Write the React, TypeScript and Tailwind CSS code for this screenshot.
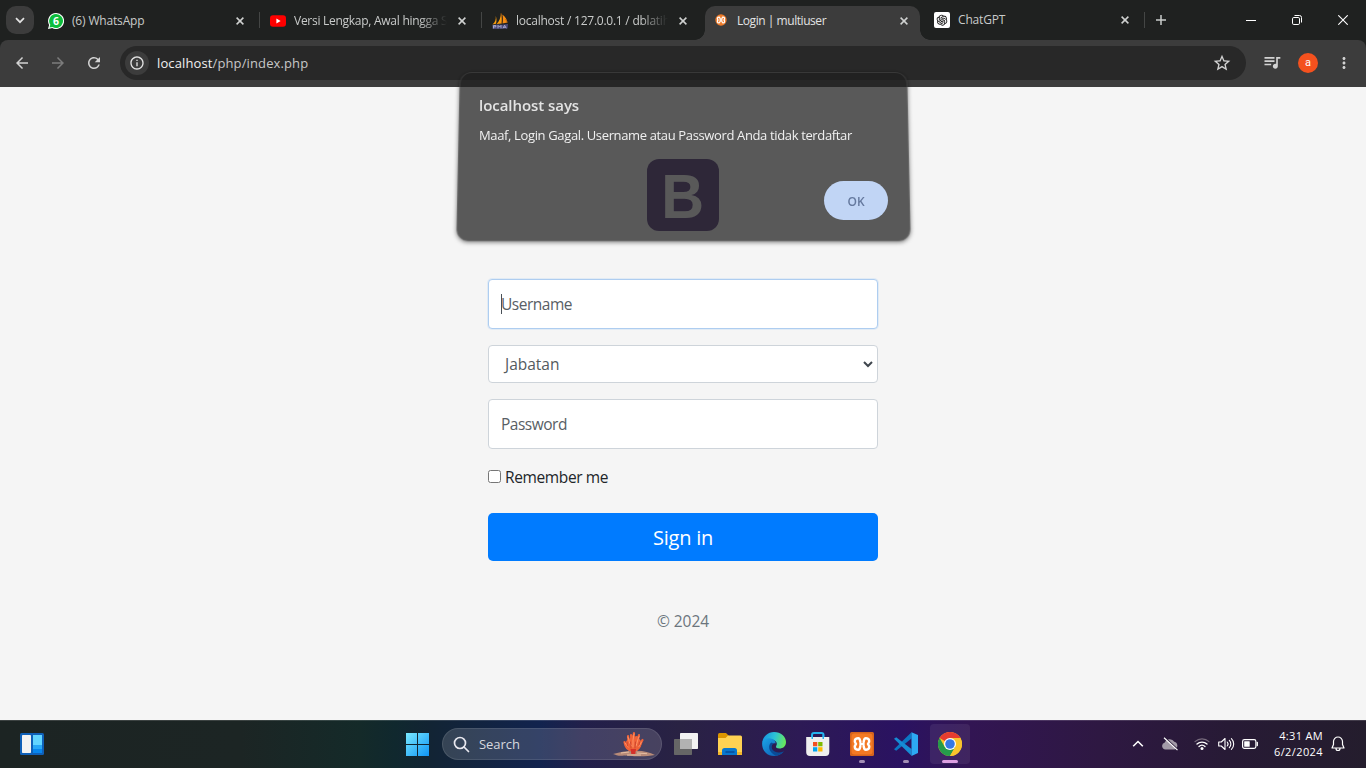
import React from 'react';
import {
  MdArrowBack,
  MdArrowForward,
  MdRefresh,
  MdStarBorder,
  MdQueueMusic,
  MdMoreVert,
  MdInfoOutline,
} from 'react-icons/md';
import { AiOutlineOpenAI } from 'react-icons/ai';

function CloseMark() {
  return (
    <svg width="8" height="8" viewBox="0 0 8 8" className="shrink-0" stroke="#d0d2d1" strokeWidth="1.5">
      <path d="M0.6 0.6L7.4 7.4M7.4 0.6L0.6 7.4" />
    </svg>
  );
}

function WhatsAppIcon() {
  return (
    <svg width="16" height="16" viewBox="0 0 16 16" className="shrink-0">
      <path d="M8 0a8 8 0 1 1-3.8 15L0 16l1.1-4A8 8 0 0 1 8 0z" fill="#fff" />
      <path d="M8 1.1a6.9 6.9 0 1 1-3.5 12.8l-3 .7.8-2.8A6.9 6.9 0 0 1 8 1.1z" fill="#0dbd3c" />
      <text x="8" y="12" textAnchor="middle" fontFamily="Open Sans, sans-serif" fontWeight="700" fontSize="10.5" fill="#fff">6</text>
    </svg>
  );
}

function YouTubeIcon() {
  return (
    <svg width="16" height="16" viewBox="0 0 16 16" className="shrink-0">
      <rect x="0" y="2.3" width="16" height="11.4" rx="3" fill="#ff0000" />
      <path d="M6.4 5.6v4.8L10.6 8z" fill="#fff" />
    </svg>
  );
}

function PmaIcon() {
  return (
    <svg width="16" height="16" viewBox="0 0 16 16" className="shrink-0">
      <path d="M3.8 3C4 6.5 3.300 9.500 .4 11.500L4 10.800C4.700 8 4.700 5.500 3.800 3z" fill="#f89c0e" />
      <path d="M9 .2C8.600 4.600 7.500 8 4.600 11.100L9.600 10.400C10.200 6.700 10 3.500 9 .2z" fill="#f89c0e" />
      <path d="M10.300 1.600C11.200 4.800 11.300 7.500 10.500 10.500L15.500 9.500C14.800 6.500 13.500 4 10.300 1.600z" fill="#f38b12" />
      <path d="M9 .2C10 4 10.100 7 9.600 10.400M13.600 6l1.600 3.400" stroke="#a85c10" strokeWidth=".7" fill="none" />
      <path d="M.3 12l5-.6 5 .3 5.700-.8-.5 4.500-6 .4-8.800.1z" fill="#4b4b78" />
      <path d="M1.500 15.400V12.500h2.300v1.400H1.500M6 15.400v-3l1.500 1.600 1.500-1.600v3M11 15.300l1.600-3 1.700 3M11.500 14.300h2.200" stroke="#b9b9da" strokeWidth=".8" fill="none" />
    </svg>
  );
}

const xamppOutline =
  'M8.200 6.300C10 6.300 9.800 8.300 10.300 9.300H13.700C14.200 8.300 14 6.300 15.800 6.300C19.300 6.300 20.300 9.300 18 12C20.300 14.700 19.300 17.700 15.800 17.700C14 17.700 14.200 15.700 13.700 14.700H10.300C9.800 15.700 10 17.700 8.200 17.700C4.700 17.700 3.700 14.700 6 12C3.700 9.300 4.700 6.300 8.200 6.300z';

function XamppMark({ ground }: { ground: string }) {
  return (
    <>
      <path d={xamppOutline} fill={ground} stroke="#fff" strokeWidth="2.500" strokeLinejoin="round" />
      <path d="M12 5.500V10.600M12 13.400V18.500" stroke={ground} strokeWidth="1.400" />
      <path d="M10.300 9V15M13.700 9V15M10.300 12H13.700" stroke="#fff" strokeWidth="1.900" />
    </>
  );
}

function XamppFavicon() {
  return (
    <svg width="12" height="12" viewBox="0 0 24 24" className="shrink-0">
      <circle cx="12" cy="12" r="11.300" fill="#f07c2a" />
      <XamppMark ground="#f07c2a" />
    </svg>
  );
}

function Tab({ icon, title, width, fade = false }: { icon: React.ReactNode; title: string; width: string; fade?: boolean }) {
  return (
    <div className={`flex h-7 shrink-0 items-center ${width}`}>
      {icon}
      <div
        className={`ml-2 min-w-0 flex-1 whitespace-nowrap ${
          fade ? 'mr-[11px] [mask-image:linear-gradient(to_right,black_82%,transparent_100%)]' : ''
        }`}
      >
        {title}
      </div>
      <CloseMark />
    </div>
  );
}

function Separator() {
  return <div className="h-4 w-px shrink-0 bg-[#444645]" />;
}

function TabStrip() {
  return (
    <div className="flex h-10 items-center bg-[#1f2120] text-[12px] leading-4 tracking-[-0.17px] text-[#c9cbca]">
      <div className="ml-1.5 flex size-7 shrink-0 items-center justify-center rounded-[10px] bg-[#3c3c3c]">
        <svg width="10" height="7" viewBox="0 0 10 7" fill="none" stroke="#e2e2e2" strokeWidth="1.7">
          <path d="M1 1.200L5 5.200L9 1.200" />
        </svg>
      </div>
      <div className="w-[3px] shrink-0" />
      <Tab width="w-[222px] pl-[11px] pr-[15px] pt-px" icon={<WhatsAppIcon />} title="(6) WhatsApp" />
      <Separator />
      <Tab width="w-[221px] pl-[10px] pr-[15px] pt-px tracking-[-0.27px]" icon={<YouTubeIcon />} title="Versi Lengkap, Awal hingga S" fade />
      <Separator />
      <Tab width="w-[221px] pl-[10px] pr-4 pt-px tracking-[-0.24px]" icon={<PmaIcon />} title="localhost / 127.0.0.1 / dblatih" fade />
      <div className="relative ml-[2px] flex h-[34px] w-[215px] shrink-0 items-center self-end rounded-t-[10px] bg-[#3c3c3c] pl-[10px] pr-3 text-[#e3e3e3]">
        <div className="absolute -left-[10px] bottom-0 size-[10px] bg-[radial-gradient(circle_at_0_0,#1f2120_9.5px,#3c3c3c_10px)]" />
        <div className="absolute -right-[10px] bottom-0 size-[10px] bg-[radial-gradient(circle_at_100%_0,#1f2120_9.5px,#3c3c3c_10px)]" />
        <div className="mb-1.5">
          <XamppFavicon />
        </div>
        <div className="mb-[5px] ml-[10px] flex-1 whitespace-nowrap tracking-[-0.45px]">Login | multiuser</div>
        <div className="mb-[5px]">
          <CloseMark />
        </div>
      </div>
      <Tab
        width="ml-[3px] w-[221px] pl-[11px] pr-[15px]"
        icon={
          <div className="flex size-4 shrink-0 items-center justify-center rounded-[2px] bg-white">
            <AiOutlineOpenAI size={14} color="#111" />
          </div>
        }
        title="ChatGPT"
      />
      <Separator />
      <svg width="10" height="10" viewBox="0 0 10 10" className="ml-[11px] shrink-0" stroke="#c9cbca" strokeWidth="1.500">
        <path d="M5 0V10M0 5H10" />
      </svg>
      <div className="flex flex-1 items-center justify-end pr-[18px]">
        <svg width="10" height="10" viewBox="0 0 10 10" stroke="#fff">
          <path d="M0 5.500H10" />
        </svg>
        <svg width="10" height="10" viewBox="0 0 10 10" className="ml-9" fill="none" stroke="#fff">
          <rect x=".5" y="2.500" width="7" height="7" rx="1.300" />
          <path d="M2.500 .5H7.500A2 2 0 0 1 9.500 2.500V7.500" />
        </svg>
        <svg width="10" height="10" viewBox="0 0 10 10" className="ml-9" stroke="#fff" strokeWidth="1.100">
          <path d="M0.300 .3L9.700 9.700M9.700 .3L.3 9.700" />
        </svg>
      </div>
    </div>
  );
}

function Toolbar() {
  return (
    <div className="bg-[#1f2120]">
      <div className="flex h-[47px] items-center rounded-t-[8px] bg-[#3c3c3c] pb-px pl-[13px]">
        <MdArrowBack size={18} color="#d2d2d2" />
        <MdArrowForward size={18} color="#7c7c7c" className="ml-[18px]" />
        <MdRefresh size={18} color="#d2d2d2" className="ml-[18px]" />
        <div className="ml-[17px] flex h-[34px] w-[1126px] items-center rounded-full bg-[#282828] pl-[5px] pr-[14px]">
          <div className="flex size-6 items-center justify-center rounded-full bg-[#3c3c3c]">
            <MdInfoOutline size={16} color="#e3e3e3" />
          </div>
          <div className="ml-2 flex-1 text-[13px] leading-5 tracking-[0.12px] text-[#c7c7c7]">
            <span className="text-[#f0f0f0]">localhost</span>/php/index.php
          </div>
          <MdStarBorder size={20} color="#d2d2d2" />
        </div>
        <MdQueueMusic size={20} color="#d2d2d2" className="mb-0.5 ml-4" />
        <div className="ml-4 flex size-5 items-center justify-center rounded-full bg-[#f4511e] pb-px font-['Roboto',sans-serif] text-[11px] leading-none text-white">
          a
        </div>
        <MdMoreVert size={18} color="#d2d2d2" className="ml-[17px]" />
      </div>
    </div>
  );
}

function LoginPage() {
  return (
    <main className="flex h-[633px] flex-col items-center bg-[#f5f5f5] pt-[72px] text-[16px] leading-6 text-[#495057]">
      <div className="flex size-[72px] items-center justify-center rounded-[12px] bg-[#563d7c] font-['Liberation_Sans',sans-serif] text-[63px] font-bold leading-[72px] text-[#f5f5f5]">
        <span className="mt-px scale-x-[0.94]">B</span>
      </div>
      <form className="mt-12 flex w-[390px] flex-col">
        <div className="flex h-[50px] items-center rounded border border-[#aecdf0] bg-white pl-3 shadow-[0_0_0_1px_rgba(0,123,255,0.08)]">
          <div className="h-5 w-px bg-[#495057]" />
          <span className="-ml-px text-[15.5px] tracking-[-0.48px] text-[#585e65]">Username</span>
        </div>
        <div className="mt-4 flex h-[38px] items-center justify-between rounded border border-[#ced4da] bg-white pl-4 pr-1">
          <span className="text-[15.5px] tracking-[-0.02px] text-[#535a60]">Jabatan</span>
          <svg width="10" height="7" viewBox="0 0 10 7" fill="none" stroke="#3f464d" strokeWidth="2">
            <path d="M1 1L5 5L9 1" />
          </svg>
        </div>
        <div className="mt-4 flex h-[50px] items-center rounded border border-[#ced4da] bg-white pl-3 text-[15.5px] tracking-[-0.5px] text-[#585e65]">
          Password
        </div>
        <label className="mt-4 flex h-6 items-center text-[#212529]">
          <span className="mb-px size-[13px] rounded-[2.500px] border border-[#767676] bg-white" />
          <span className="ml-1 text-[15.5px] tracking-[-0.38px]">Remember me</span>
        </label>
        <button type="button" className="mt-6 h-12 rounded-[5px] bg-[#007bff] pt-px text-[20px] leading-[30px] tracking-[-0.25px] text-white">
          Sign in
        </button>
      </form>
      <p className="mt-12 text-[15.5px] tracking-[-0.05px] text-[#6c757d]">© 2024</p>
    </main>
  );
}

function AlertDialog() {
  return (
    <div className="absolute left-[458px] top-[72px] h-[169px] w-[450px]">
      <div className="absolute -left-[0.5px] right-0 -top-[0.8px] bottom-0 rounded-[12px] border border-white/10 bg-[rgba(30,30,30,0.726)] shadow-[0_1px_4px_rgba(0,0,0,0.5)] [transform:perspective(1000px)_rotateX(5.3deg)]" />
      <div className="relative flex h-full flex-col pl-[21px] pr-5 pt-[23px]">
        <h2 className="text-[15px] font-semibold leading-5 tracking-[-0.05px] text-[#e3e3e3]">localhost says</h2>
        <p className="mt-[11px] whitespace-nowrap text-[13px] leading-[18px] tracking-[-0.36px] text-[#f0f0f0]">
          Maaf, Login Gagal. Username atau Password Anda tidak terdaftar
        </p>
        <button type="button" className="mt-[37px] h-[39px] w-16 self-end rounded-full bg-[#c1d5f5] pt-0.5 text-[12px] font-semibold text-[#65799e]">
          OK
        </button>
      </div>
    </div>
  );
}

function CoralArt() {
  return (
    <svg width="44" height="26" viewBox="0 0 44 26">
      <path d="M1 23C8 21 14 20 20 20C29 19 37 21 43 24C34 26 16 25 12 24.500C7 25.500 4 24 1 23z" fill="#b88b78" />
      <path d="M9 22l8-1M25 22l10 .7M15 24h14" stroke="#e6bea2" strokeWidth="1" />
      <path d="M14 17C12 13 14 9 17 8L21 4L26 7C30 9 30 14 28 17L25 20H17z" fill="#f0653c" />
      <g fill="none" strokeLinecap="round" strokeLinejoin="round">
        <path d="M21 20V9L22 2M21 19C16 18 17 12 16 5M21 19C26 17 25 11 27 4M20 19C14 19 13 14 12.500 11M22 19C29 18 28 12 30.500 9M20 12L19 4M24 15L24.500 6" stroke="#ef6238" strokeWidth="2.200" />
        <path d="M21 16V9L22 3M19.500 15C17 12 17 9 16 6M24 15C25.500 11 25.500 9 27 5.500M16 16L13 12M27 15.500L29.500 11" stroke="#ff9467" strokeWidth="1" />
        <path d="M19 17L18.500 11M23 17L23.500 11M15.500 15L15 11M27 14L27.500 11" stroke="#c5402c" strokeWidth=".8" />
      </g>
      <path d="M18.500 18h5.500l-.7 5h-4z" fill="#d4312a" />
    </svg>
  );
}

function WidgetsIcon() {
  return (
    <svg width="24" height="22" viewBox="0 0 24 22">
      <rect width="24" height="22" rx="1.500" fill="#0f60b8" />
      <rect x="2" y="2" width="9" height="18" rx=".7" fill="#f3f3f3" />
      <rect x="13" y="2" width="9" height="10" fill="#62d5ff" />
      <rect x="13" y="12" width="9" height="4" fill="#27a8f7" />
      <rect x="13" y="16" width="9" height="4" fill="#0786ee" />
    </svg>
  );
}

function StartIcon() {
  return (
    <svg width="24" height="24" viewBox="0 0 24 24">
      <defs>
        <linearGradient id="start" gradientUnits="userSpaceOnUse" x1="0" y1="0" x2="23" y2="23">
          <stop stopColor="#7beaff" />
          <stop offset="1" stopColor="#1196f5" />
        </linearGradient>
      </defs>
      <path d="M0 1H11V12H0zM12 1H23V12H12zM0 13H11V24H0zM12 13H23V24H12z" fill="url(#start)" />
    </svg>
  );
}

function TaskViewIcon() {
  return (
    <svg width="24" height="24" viewBox="0 0 24 24">
      <rect x="6" y="1" width="18" height="16" rx=".7" fill="#f2f2f2" />
      <rect x="0" y="7" width="18" height="16" rx=".7" fill="#666" />
      <rect x="6" y="7" width="12" height="10" fill="#b2b2b2" />
    </svg>
  );
}

function ExplorerIcon() {
  return (
    <svg width="24" height="24" viewBox="0 0 24 24">
      <path d="M0 2.500Q0 1 1.500 1H8L11 4V8H0z" fill="#dc9500" />
      <path d="M0 6H7.500L10 3.500H22.500Q24 3.500 24 5V23H0z" fill="#ffd253" />
      <path d="M0 20H24V22.500Q24 23 23 23H1Q0 23 0 22.500z" fill="#f2b52a" />
      <path d="M4 23V18.500Q4 16 6.500 16H16.500Q19 16 19 18.500V23z" fill="#0877ce" />
      <path d="M7.500 20H16.500" stroke="#0656a6" strokeWidth="2" />
    </svg>
  );
}

function EdgeIcon() {
  return (
    <svg width="24" height="24" viewBox="0 0 24 24">
      <defs>
        <linearGradient id="edgeTop" x1="0" y1=".3" x2="1" y2=".5">
          <stop stopColor="#1694e3" />
          <stop offset=".5" stopColor="#2cc3d6" />
          <stop offset="1" stopColor="#69e85a" />
        </linearGradient>
        <linearGradient id="edgeLow" x1="0" y1="0" x2="1" y2="1">
          <stop stopColor="#1ba4e7" />
          <stop offset="1" stopColor="#0b55ae" />
        </linearGradient>
      </defs>
      <path d="M.2 10.500C1 4.500 6 0 12 0C19 0 24 4.800 24 10C24 14.500 20.800 16.500 17.500 16.500C14.500 16.500 13.400 15.200 14.200 14C16.300 10.500 13 7.500 9 7.500C5 7.500 1.500 9 .2 10.500z" fill="url(#edgeTop)" />
      <path d="M.2 10.500C1.500 7.500 5 5.800 8.500 6.500C12 7 14 9 13.500 11.500C11 10.500 8.700 13 9.300 16C10 19.700 14 22 18 21.200C19.500 21 20.800 20.300 22 19.300C19.500 22.500 16 24 12 24C5.300 24-.6 18.500 .2 10.500z" fill="url(#edgeLow)" />
      <path d="M9.500 10.500C5.500 12.500 6.200 20.500 14 23.800C17 23.400 20 22 22 19.300C17 21.700 11.800 20.500 9.800 16.500C9 14.500 10 12.500 11.500 11.500z" fill="#0a4b97" />
    </svg>
  );
}

function StoreIcon() {
  return (
    <svg width="24" height="24" viewBox="0 0 24 24">
      <path d="M6 8V3Q6 1 8 1H15.500Q17.500 1 17.500 3V8" fill="none" stroke="#25b4f0" strokeWidth="2" />
      <path d="M.2 5H23.300V20Q23.300 24 19.500 24H4Q.2 24 .2 20z" fill="#efefef" />
      <path d="M5.500 5V3H7V7H5.500zM16.500 5V3H18V7H16.500z" fill="#25b4f0" />
      <path d="M7 10h4.300v4.300H7z" fill="#f25022" />
      <path d="M12.200 10h4.300v4.300h-4.300z" fill="#7fba00" />
      <path d="M7 15.200h4.300v4.300H7z" fill="#00a4ef" />
      <path d="M12.200 15.200h4.300v4.300h-4.300z" fill="#ffb900" />
    </svg>
  );
}

function XamppIcon() {
  return (
    <svg width="24" height="24" viewBox="0 0 24 24">
      <rect width="24" height="24" rx="1.500" fill="#d6641c" />
      <rect x="1.500" y="1.500" width="21" height="21" rx="3" fill="#f47a24" />
      <XamppMark ground="#f47a24" />
    </svg>
  );
}

function VsCodeIcon() {
  return (
    <svg width="24" height="24" viewBox="0 0 24 24">
      <path d="M17.500 .2V6.500L2.200 18.800L0 17.300z" fill="#0b76c4" />
      <path d="M0 6.700L2.200 5.200L17.500 17V23.800z" fill="#168bd5" />
      <path d="M17.500 .2L24 3V21L17.500 23.900z" fill="#2da9f3" />
    </svg>
  );
}

function ChromeIcon() {
  return (
    <svg width="24" height="24" viewBox="0 0 24 24">
      <circle cx="12" cy="12" r="12" fill="#f9c42c" />
      <path d="M12 12L1.600 6A12 12 0 0 1 22.400 6z" fill="#e63c2f" />
      <path d="M1.600 6A12 12 0 0 0 12 24L17.200 15L12 12L6.800 15z" fill="#259b4b" />
      <path d="M12 6H22.400A12 12 0 0 1 12 24L17.200 15z" fill="#f9c42c" />
      <circle cx="12" cy="12" r="6" fill="#fff" />
      <circle cx="12" cy="12" r="4.800" fill="#3478e5" />
    </svg>
  );
}

function Pinned({ children, marker, active = false }: { children: React.ReactNode; marker?: string; active?: boolean }) {
  return (
    <div className={`relative mx-0.5 flex size-10 shrink-0 items-center justify-center rounded ${active ? 'bg-white/[0.07]' : ''}`}>
      {children}
      {marker && <div className={`absolute bottom-px h-[3px] rounded-full ${marker}`} />}
    </div>
  );
}

function Tray() {
  return (
    <div className="flex flex-1 items-center justify-end pr-[21px] text-white">
      <svg width="12" height="8" viewBox="0 0 12 8" fill="none" stroke="#fff" strokeWidth="1.600">
        <path d="M1.200 6.200L6 1.500L10.800 6.200" />
      </svg>
      <svg width="16" height="14" viewBox="0 0 16 14" className="ml-[18px]">
        <path d="M3.500 12.500A3.500 3.500 0 0 1 2.800 5.600A5.300 5.300 0 0 1 12.300 4.800A4 4 0 0 1 12.500 12.500z" fill="#a39ba8" />
        <path d="M2.600 .4L16 12.700" stroke="#291a38" strokeWidth="1.500" />
        <path d="M2 .8L15.500 13.100" stroke="#fff" strokeWidth="1.200" />
      </svg>
      <svg width="16" height="14" viewBox="0 0 16 14" className="ml-4" fill="none" strokeLinecap="round">
        <path d="M1 4.600A10.400 10.400 0 0 1 15 4.600" stroke="#776b7d" strokeWidth="1.200" />
        <path d="M3 7.100A7.400 7.400 0 0 1 13 7.100M5 9.500A4.400 4.400 0 0 1 11 9.500" stroke="#fff" strokeWidth="1.300" />
        <circle cx="8" cy="11.500" r="1.500" fill="#fff" />
      </svg>
      <svg width="17" height="14" viewBox="0 0 17 14" className="ml-2" fill="none" stroke="#fff" strokeWidth="1.100" strokeLinecap="round" strokeLinejoin="round">
        <path d="M.7 5H3.300L7 1.500V12.500L3.300 9H.7z" />
        <path d="M9.200 5A3 3 0 0 1 9.200 9M11.300 3.300A5.200 5.200 0 0 1 11.300 10.700M13.400 1.600A7.500 7.500 0 0 1 13.400 12.400" />
      </svg>
      <svg width="17" height="12" viewBox="0 0 17 12" className="ml-[7px]">
        <rect x=".6" y="1.600" width="13.300" height="8.800" rx="1.800" fill="none" stroke="#fff" strokeWidth="1.200" />
        <rect x="2.200" y="3.200" width="5.500" height="5.600" rx=".5" fill="#fff" />
        <path d="M15.300 4.500V7.500" stroke="#fff" strokeWidth="1.300" strokeLinecap="round" />
      </svg>
      <div className="ml-[13px] w-[51px] whitespace-nowrap text-right text-[11px] leading-4">
        <div className="flex justify-end tracking-[0.33px]">4:31 AM</div>
        <div className="flex justify-end tracking-[0.4px]">6/2/2024</div>
      </div>
      <svg width="14" height="16" viewBox="0 0 14 16" className="ml-2" fill="none" stroke="#fff" strokeWidth="1.200" strokeLinejoin="round">
        <path d="M7 1A4.500 4.500 0 0 0 2.500 5.500V8.500L1 12H13L11.500 8.500V5.500A4.500 4.500 0 0 0 7 1zM5 12.500A2 2 0 0 0 9 12.500" />
      </svg>
    </div>
  );
}

function Taskbar() {
  return (
    <footer className="flex h-12 items-center bg-[linear-gradient(90deg,#1c2423_0px,#1c2524_240px,#142a29_360px,#10282e_395px,#122434_430px,#12234e_540px,#221f4a_585px,#292243_680px,#2d1a55_800px,#2a1261_900px,#321553_970px,#2e1842_1100px,#271a35_1230px,#241d2d_1366px)] shadow-[inset_0_1px_0_rgba(255,255,255,0.14)]">
      <div className="ml-5 w-[386px] shrink-0">
        <WidgetsIcon />
      </div>
      <StartIcon />
      <div className="ml-3 mr-2 flex h-8 w-[220px] shrink-0 items-center rounded-full border border-white/10 bg-white/15 pl-[10px] pr-[5px]">
        <svg width="17" height="17" viewBox="0 0 17 17" fill="none" stroke="#e8e8ef" strokeWidth="1.700">
          <circle cx="7" cy="7" r="5.500" />
          <path d="M11 11L15.500 15.500" strokeLinecap="round" />
        </svg>
        <span className="ml-[9px] flex-1 text-[13px] leading-5 tracking-[-0.05px] text-[#d7d8df]">Search</span>
        <CoralArt />
      </div>
      <div className="-ml-1.5 flex">
        <Pinned><TaskViewIcon /></Pinned>
        <Pinned><ExplorerIcon /></Pinned>
        <Pinned><EdgeIcon /></Pinned>
        <Pinned><StoreIcon /></Pinned>
        <Pinned marker="w-1.5 bg-[#a38fb5]"><XamppIcon /></Pinned>
        <Pinned marker="w-1.5 bg-[#a38fb5]"><VsCodeIcon /></Pinned>
        <Pinned active marker="w-4 bg-[#dd9fe2]"><ChromeIcon /></Pinned>
      </div>
      <Tray />
    </footer>
  );
}

export default function App() {
  return (
    <div className="relative h-[768px] w-[1366px] overflow-hidden font-['Open_Sans','Noto_Sans',sans-serif]">
      <TabStrip />
      <Toolbar />
      <LoginPage />
      <Taskbar />
      <AlertDialog />
    </div>
  );
}
